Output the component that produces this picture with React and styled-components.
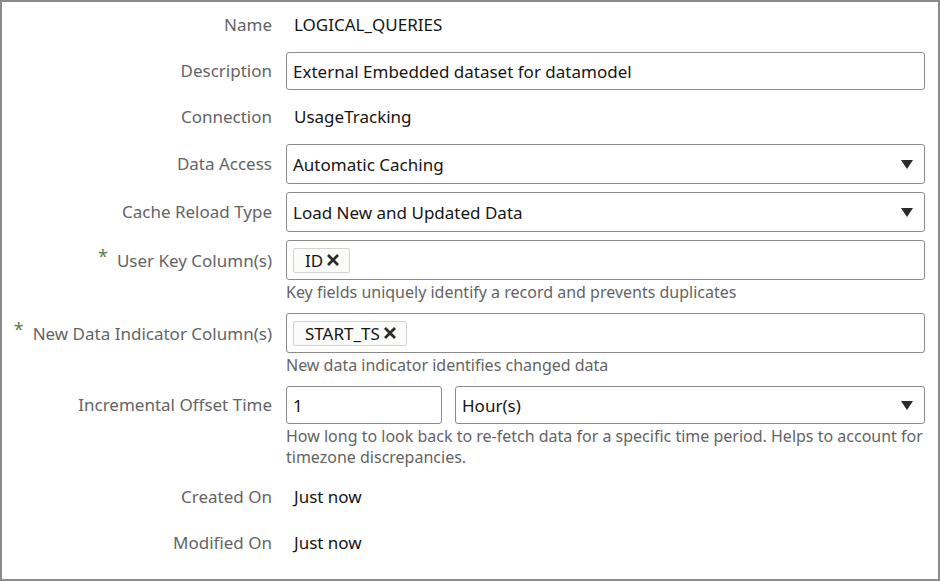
import React from 'react';
import styled, { createGlobalStyle } from 'styled-components';

const GlobalStyle = createGlobalStyle`
  html, body {
    margin: 0;
    padding: 0;
    background: #fff;
  }
  body {
    font-family: 'Noto Sans', 'Open Sans', sans-serif;
    color: #161513;
  }
`;

const Panel = styled.div`
  box-sizing: border-box;
  width: 940px;
  height: 581px;
  border: 2px solid #8b8b8b;
  padding: 4px 13px 0 0;
  display: flex;
  flex-direction: column;
  gap: 8px;
`;

const Row = styled.div`
  display: grid;
  grid-template-columns: 270px 1fr;
  column-gap: 14px;
  margin-bottom: ${p => p.extra || 0}px;
`;

const Label = styled.div`
  height: ${p => p.h || 38}px;
  line-height: ${p => p.h || 38}px;
  text-align: right;
  font-size: 17px;
  color: #646464;
  white-space: nowrap;
`;

const Required = styled.span`
  color: #5b7f4a;
  font-size: 18px;
  margin-right: 9px;
  position: relative;
  top: -4px;
`;

const Field = styled.div`
  display: flex;
  flex-direction: column;
  min-width: 0;
`;

const Value = styled.div`
  height: 38px;
  line-height: 38px;
  padding-left: 8px;
  font-size: 17px;
  color: #161513;
`;

const TextBox = styled.div`
  box-sizing: border-box;
  height: 38px;
  width: ${p => p.w ? `${p.w}px` : 'auto'};
  flex: ${p => p.grow ? '1' : 'none'};
  border: 1px solid #8d8b89;
  border-radius: 3px;
  padding: 0 6px;
  display: flex;
  align-items: center;
  font-size: 17px;
  color: #161513;
`;

const SelectBox = styled(TextBox)`
  height: ${p => p.h || 40}px;
  justify-content: space-between;
  padding-right: 11px;
`;

const Caret = styled.span`
  width: 0;
  height: 0;
  border-left: 6px solid transparent;
  border-right: 6px solid transparent;
  border-top: 9px solid #2b2b2b;
`;

const Pair = styled.div`
  display: flex;
  gap: 13px;
`;

const TagBox = styled(TextBox)`
  height: 40px;
  padding: 0 6px;
`;

const Chip = styled.span`
  box-sizing: border-box;
  height: 25px;
  display: inline-flex;
  align-items: center;
  gap: 3px;
  padding: 0 9px 0 11px;
  border: 1px solid #d4d3d1;
  border-radius: 2px;
  background: #fbfbfa;
  font-size: 17px;
  color: #161513;
`;

const Help = styled.div`
  margin-top: 2px;
  font-size: 16px;
  line-height: 21px;
  color: #646464;
`;

const Close = () => (
  <svg width="14" height="14" viewBox="0 0 14 14">
    <path d="M2 2 L12 12 M12 2 L2 12" stroke="#2b2b2b" strokeWidth="2.8" strokeLinecap="butt" />
  </svg>
);

export default function App() {
  return (
    <>
      <GlobalStyle />
      <Panel>
        <Row>
          <Label>Name</Label>
          <Value>LOGICAL_QUERIES</Value>
        </Row>
        <Row>
          <Label>Description</Label>
          <TextBox>External Embedded dataset for datamodel</TextBox>
        </Row>
        <Row>
          <Label>Connection</Label>
          <Value>UsageTracking</Value>
        </Row>
        <Row>
          <Label h={40}>Data Access</Label>
          <SelectBox>Automatic Caching<Caret /></SelectBox>
        </Row>
        <Row>
          <Label h={40}>Cache Reload Type</Label>
          <SelectBox>Load New and Updated Data<Caret /></SelectBox>
        </Row>
        <Row extra={2}>
          <Label h={40}><Required>*</Required>User Key Column(s)</Label>
          <Field>
            <TagBox><Chip>ID<Close /></Chip></TagBox>
            <Help>Key fields uniquely identify a record and prevents duplicates</Help>
          </Field>
        </Row>
        <Row extra={2}>
          <Label h={40}><Required>*</Required>New Data Indicator Column(s)</Label>
          <Field>
            <TagBox><Chip>START_TS<Close /></Chip></TagBox>
            <Help>New data indicator identifies changed data</Help>
          </Field>
        </Row>
        <Row extra={2}>
          <Label>Incremental Offset Time</Label>
          <Field>
            <Pair>
              <TextBox w={156}>1</TextBox>
              <SelectBox grow h={38}>Hour(s)<Caret /></SelectBox>
            </Pair>
            <Help>How long to look back to re-fetch data for a specific time period. Helps to account for timezone discrepancies.</Help>
          </Field>
        </Row>
        <Row>
          <Label>Created On</Label>
          <Value>Just now</Value>
        </Row>
        <Row>
          <Label>Modified On</Label>
          <Value>Just now</Value>
        </Row>
      </Panel>
    </>
  );
}
